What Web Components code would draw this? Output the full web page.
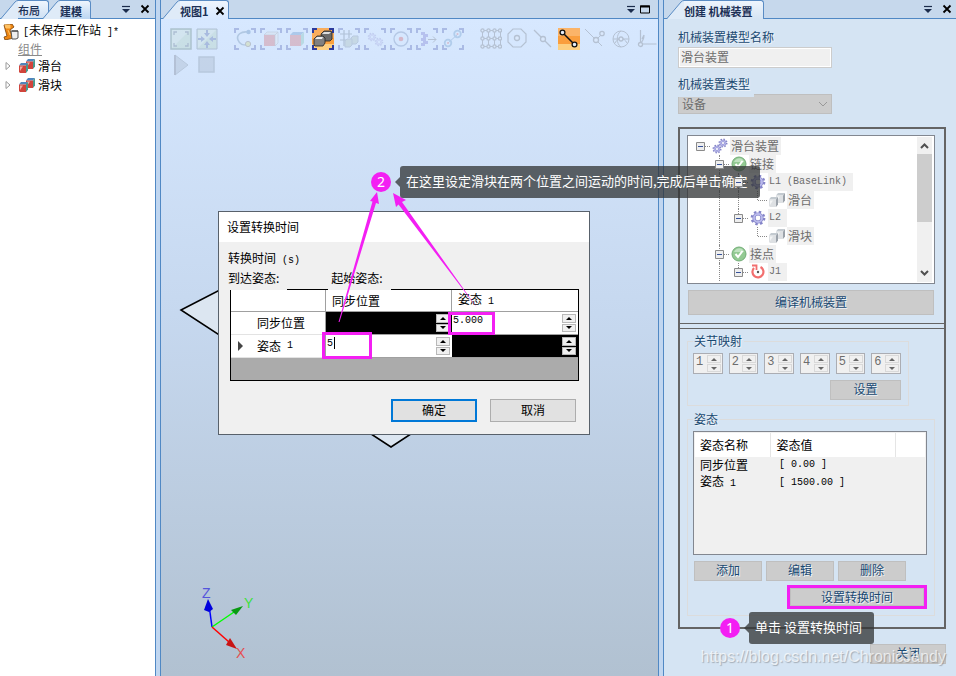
<!DOCTYPE html>
<html lang="zh-CN">
<head>
<meta charset="utf-8">
<title>创建 机械装置</title>
<style>
html, body { height: 100%; }
body {
  margin: 0; min-height: 676px; position: relative; overflow: hidden;
  font: 12px/16px "Noto Sans CJK SC", sans-serif; color: #000;
}
</style>
</head>
<body>
<station-app></station-app>
<script>
const MONO = '"Liberation Mono", "Noto Sans CJK SC", monospace';
const corners = '<path d="M1 5V1h4M17 1h4v4M21 17v4h-4M5 21H1v-4" fill="none" stroke="#2c3a9c" stroke-width="2"/>';
const gear = (cx, cy, r, w) => `<circle cx="${cx}" cy="${cy}" r="${r}" fill="none" stroke="#8484c8" stroke-width="${w}"/><circle cx="${cx}" cy="${cy}" r="${r + w * .7}" fill="none" stroke="#8484c8" stroke-width="${w * .7}" stroke-dasharray="${(r + w * .7) * .3927} ${(r + w * .7) * .3927}"/><circle cx="${cx}" cy="${cy}" r="${r}" fill="none" stroke="#b9b9ec" stroke-width="${w * .6}"/>`;
const oneCube = (x, y, f, hi, side, top) => `<g transform="translate(${x} ${y})"><path d="M0 2.500L2 0h7L7 2.500z" fill="${top}"/><path d="M0 2.500h7V10H1L0 9z" fill="${f}"/><path d="M1 3.500h3L1 8z" fill="${hi}"/><path d="M7 2.500L9 0v7.500L7 10z" fill="${side}"/></g>`;
const cubes = (f, hi, side, top) => oneCube(7, 1, f, hi, side, top) + oneCube(0, 5, f, hi, side, top);
const ring = (x, y, r = 2.5, c = '#555') => `<circle cx="${x}" cy="${y}" r="${r}" fill="#e6eef8" stroke="${c}" stroke-width="1.3"/>`;
const ICONS = {
  fit: [22, '<path d="M1 1h20v20H1z" fill="#a5c8a0" stroke="#355a46" stroke-width="1.500"/><path d="M2 2h18L2 20z" fill="#fff" opacity=".4"/><path d="M4 7V4h3M15 4h3v3M18 15v3h-3M7 18H4v-3" fill="none" stroke="#345" stroke-width="1.300"/>'],
  center: [22, '<path d="M1 1h20v20H1z" fill="#a5c8a0" stroke="#456"/><path d="M2 2h18L2 20z" fill="#fff" opacity=".4"/><path d="M11 9L8 5h2V2h2v3h2zM11 13l-3 4h2v3h2v-3h2zM9 11L5 8v2H2v2h3v2zM13 11l4-3v2h3v2h-3v2z" fill="#243a86"/>'],
  curve: [22, corners + '<path d="M14 4C7 3 2 7 4 12s5 5 9 5" fill="none" stroke="#456d92" stroke-width="1.600"/><circle cx="14.500" cy="4" r="2.200" fill="#2c65a0"/><circle cx="14" cy="16" r="2.600" fill="#d0d254" stroke="#654"/>'],
  surface: [22, corners + '<path d="M4 7l3-3h11l-3 3z" fill="#ddd" stroke="#777" stroke-width=".6"/><path d="M4 7h11v11H4z" fill="#d34343"/><path d="M15 7l3-3v11l-3 3z" fill="#e8e8e8" stroke="#777" stroke-width=".6"/>'],
  solid: [22, corners + '<path d="M4 7l3-3h11l-3 3z" fill="#3873b5"/><path d="M4 7h11v11H4z" fill="#d34343"/><path d="M15 7l3-3v11l-3 3z" fill="#63b49a"/>'],
  part: [22, '<path d="M0 0h22v22H0z" fill="#f9ad5c"/><path d="M0 10h22v6H0z" fill="#fba13f"/><path d="M0 16h22v6H0z" fill="#fcce80"/>' + corners + '<path d="M9 6l3-3h7l1 2v6l-2 2h-8z" fill="#6a6a6a" stroke="#222" stroke-width=".8"/><path d="M10 6l2-2h7l-2 2z" fill="#ddd"/><path d="M2 11l3-3h6l2 2v5l-2 3H3l-1-1z" fill="#808080" stroke="#222" stroke-width=".8"/><path d="M3 11l2-2h6l-1 2z" fill="#eee"/>'],
  mesh: [22, corners + '<path d="M6 2v16M11 2v8M2 6h12M2 12h7" stroke="#456" stroke-width="1.200"/><path d="M13 10l2-2h5v6l-2 2h-5z" fill="#9aaf9f" stroke="#678"/><path d="M7 13l2-2h5v6l-2 2H7z" fill="#9aaf9f" stroke="#678"/>'],
  mech: [22, corners + gear(8, 9, 2.2, 2) + gear(15, 14, 2.2, 2)],
  target: [22, corners + '<circle cx="11" cy="11" r="7" fill="none" stroke="#526d9d" stroke-width="1.300"/><circle cx="11" cy="11" r="2.300" fill="#d63030"/>'],
  frame: [22, corners + '<path d="M5 4h4v2h3v3h-2v4h2v3h-3v2H5v-3h2v-2H5v-3h2V7H5z" fill="#5854c0"/><path d="M12 11.500h8M17 8.500l3 3-3 3" fill="none" stroke="#555"/>'],
  path: [22, corners + '<path d="M6 15L16 6" stroke="#4874a8"/><circle cx="6" cy="15" r="3.300" fill="none" stroke="#4881b8" stroke-width="1.800"/><circle cx="15.500" cy="6" r="3.300" fill="none" stroke="#4881b8" stroke-width="1.800"/><circle cx="6" cy="15" r="1" fill="#d44"/><circle cx="15.500" cy="6" r="1" fill="#d44"/>'],
  snap: [22, '<path d="M2.500 2.500h18v16h-18zM8.500 2.500v16M14.500 2.500v16M2.500 10.500h18" fill="none" stroke="#555"/>' + [2.5, 8.5, 14.5, 20].map(x => [2.5, 10.5, 18.5].map(y => ring(x, y, 1.6)).join('')).join('')],
  octagon: [22, '<path d="M7 1h8l5 5v8l-5 5H7l-5-5V6z" fill="none" stroke="#555" stroke-width="1.200"/>' + ring(11, 10)],
  mid: [22, '<path d="M2 2l17 17" stroke="#555" stroke-width="1.200"/>' + ring(11, 11)],
  end: [22, '<path d="M0 0h22v22H0z" fill="#fbb469"/><path d="M0 8h22v8H0z" fill="#fa9e3d"/><path d="M0 16h22v6H0z" fill="#fdcf80"/><path d="M5 5l12 12" stroke="#111" stroke-width="1.500"/>' + ring(4.5, 4.5, 2.4, '#111') + ring(16.5, 16.5, 2.4, '#111')],
  edge: [22, '<path d="M1 1l17 17M12 12l6-6" stroke="#555"/>' + ring(12, 12) + ring(18, 5.5, 2.2)],
  gravity: [22, '<circle cx="11" cy="11" r="8" fill="none" stroke="#555"/><path d="M3 11h16M11 3c-5 3-5 13 0 16M5 15c3-6 9-6 12 0" fill="none" stroke="#555"/>' + ring(11, 11, 2)],
  origin: [22, '<path d="M4.500 2v14h16M4 16c3-3 4-6 4-9M8 7l-2 4" fill="none" stroke="#555" stroke-width="1.200"/>' + ring(4.5, 16.5, 2)],
  play: [22, '<path d="M5 1l13 10L5 21z" fill="#93a2b2" stroke="#667482"/><path d="M5 1v20" stroke="#556" stroke-width="2"/>'],
  stop: [22, '<path d="M3 3h15v15H3z" fill="#93a2b2" stroke="#667482" stroke-width="1.500"/>'],
  robot: [16, '<path d="M1 1l8-1 2 3-4 3 2 5h2v3l-9 2-1-3 3-1-2-7z" fill="#ee8713" stroke="#784007" stroke-width=".8"/><path d="M2 1h5v3H3zM5 6l2 5" fill="#ffc265" stroke="#ffc265"/><path d="M8 7h7v7l-2 1H9z" fill="#eee" stroke="#555"/><path d="M9 7h6" stroke="#333"/>'],
  block: [16, cubes('#d0453c', '#eeb0a4', '#4a9a8c', '#4f86bd')],
  ghost: [16, cubes('#dde0e3', '#f4f5f6', '#9ba2aa', '#c3cad0')],
  gears: [16, gear(5, 11, 2.2, 2.2) + gear(11, 5, 2.2, 2.2)],
  gear: [16, gear(8, 8, 4, 3.2)],
  check: [16, '<circle cx="8" cy="8" r="7" fill="#93ca93" stroke="#72ad77"/><path d="M3 6c2-5 9-5 10 0" fill="#bfe2bf"/><path d="M4.500 8l2.500 3 4.500-6" fill="none" stroke="#fff" stroke-width="2"/>'],
  rotate: [16, '<path d="M10.500 3A5.500 5.500 0 1 1 4 4" fill="none" stroke="#f26f6f" stroke-width="2.200"/><path d="M2 1.500h4.500V6" fill="none" stroke="#f26f6f" stroke-width="1.800"/><circle cx="8" cy="8" r="1.200" fill="#555"/>'],
  drop: [10, '<path d="M1 2.500h8" stroke="#1b2c4c" stroke-width="1.200"/><path d="M1 5h8L5 9z" fill="#1b2c4c"/>'],
  close: [10, '<path d="M1.500 1.500l7 7M8.500 1.500l-7 7" stroke="#000" stroke-width="1.800"/>'],
  max: [10, '<path d="M.5 2h9v7h-9z" fill="none" stroke="#000"/><path d="M0 2.500h10" stroke="#000" stroke-width="2"/>'],
  tri: [10, '<path d="M3 1.500L7 5 3 8.500z" fill="none" stroke="#999"/>']
};

function define(name, markup, setup) {
  const t = document.createElement('template');
  customElements.define(name, class extends HTMLElement {
    constructor() {
      super();
      t.innerHTML ||= markup;
      this.attachShadow({ mode: 'open' }).append(t.content.cloneNode(true));
    }
    connectedCallback() { if (setup) setup(this, this.shadowRoot); }
  });
}

define('ui-icon', `<style>:host{display:block;flex:none;line-height:0} svg{display:block}</style><svg aria-hidden="true"></svg>`, (el, root) => {
  const [size, body] = ICONS[el.getAttribute('name')];
  const s = root.querySelector('svg');
  s.setAttribute('viewBox', `0 0 ${size} ${size}`);
  s.setAttribute('width', size); s.setAttribute('height', size);
  s.innerHTML = body;
});

define('icon-button', `<style>
  :host{display:block;flex:none}
  :host([faded]) button{opacity:.25}
  button{display:block;border:0;padding:0;margin:0;background:none}
</style><button type="button"></button>`, (el, root) => {
  const b = root.querySelector('button');
  b.setAttribute('aria-label', el.getAttribute('icon'));
  b.innerHTML = `<ui-icon name="${el.getAttribute('icon')}"></ui-icon>`;
});

define('dock-tab', `<style>
  :host{display:flex;height:18px;flex:none;margin-right:-1px}
  :host([active]){height:19px;position:relative}
  svg{flex:none;display:block}
  .b{display:flex;align-items:center;gap:6px;box-sizing:border-box;border-top:1px solid #5a8cc4;border-right:1px solid #5a8cc4;border-radius:0 3px 0 0;
     background:linear-gradient(#eef5fd,var(--end,#cfe0f3));padding:1px var(--tab-pad,8px) 0 0;font-size:11px;color:#1b2f55;white-space:nowrap}
  button{all:unset;font-weight:500}
  :host([active]) button{font-weight:700}
</style><svg width="17" height="19" viewBox="0 0 17 19"><path d="M0 19L14 2q1.500-1.500 3-1.500V19z" fill="#dfebf8"/><path d="M0 18.500L14 2q1.500-1.500 3-1.500" fill="none" stroke="#5a8cc4"/></svg><div class="b"><button type="button"><slot></slot></button><slot name="end"></slot></div>`);

define('dock-panel', `<style>
  :host{display:flex;flex-direction:column;min-width:0;box-sizing:border-box}
  header{display:flex;flex:none;height:18px;background:#c6d8ec;border-bottom:1px solid #5088c4}
  .tabs{display:flex;flex:1;padding-left:var(--tab-start,0)}
  .tools{display:flex;align-items:center;gap:var(--tool-gap,9px);padding-right:var(--tool-end,5px)}
  .content{flex:1;display:flex;flex-direction:column;min-height:0;position:relative}
</style><header><div class="tabs"><slot name="tab"></slot></div><div class="tools"><slot name="tool"></slot></div></header><div class="content"><slot></slot></div>`);

define('push-button', `<style>
  :host{display:block;flex:none}
  button{display:block;width:100%;height:var(--h,20px);box-sizing:border-box;margin:0;padding:0 0 2px;border:1px solid #bfbfbf;background:#ccc;
    font:12px/16px "Noto Sans CJK SC",sans-serif;color:#1b4a72;text-shadow:1px 1px #eef3f8}
  :host([kind="dialog"]) button{background:#e1e1e1;border-color:#adadad;color:#000;text-shadow:none}
  :host([primary]) button{border:2px solid #0078d7!important}
</style><button type="button"><slot></slot></button>`);

define('spin-arrows', `<style>
  :host{display:grid;grid-template-rows:1fr 1fr;width:14px;gap:1px;flex:none;box-sizing:border-box}
  button{display:grid;place-items:center;border:1px solid #b8b8b8;background:#f0f0f0;padding:0;margin:0;min-height:0}
  :host([dim]) button{border-color:#d9d9d9}
  :host([dim]) path{fill:#666}
  svg{display:block}
</style><button type="button" aria-label="增加"><svg width="6" height="3"><path d="M3 0l3 3H0z"/></svg></button><button type="button" aria-label="减少"><svg width="6" height="3"><path d="M0 0h6L3 3z"/></svg></button>`);

define('joint-spin', `<style>
  :host{display:flex;width:30px;height:21px;box-sizing:border-box;border:1px solid #abadb3;background:#f0f0f0;padding:1px}
  input{flex:1;min-width:0;width:0;border:0;padding:0 0 4px 1px;margin:0;background:none;color:#6d6d6d;font:12px/12px ${MONO}}
</style><input type="text"><spin-arrows dim></spin-arrows>`, (el, root) => {
  const i = root.querySelector('input');
  i.value = el.getAttribute('value'); i.setAttribute('aria-label', '关节 ' + i.value);
});

define('time-cell', `<style>
  :host{display:flex;height:22px;box-sizing:border-box;padding:2px 2px 2px 0;position:relative}
  :host([dark]){background:#000}
  :host([editing])::before{content:"";position:absolute;left:8px;top:2px;height:12px;border-left:1px solid #000}
  input{flex:1;min-width:0;width:0;height:14px;border:0;padding:0 0 0 1px;margin:0;background:none;color:#000;font:10px/14px ${MONO}}
</style><input type="text"><spin-arrows></spin-arrows>`, (el, root) => {
  const i = root.querySelector('input');
  i.value = el.getAttribute('value') || ''; i.setAttribute('aria-label', el.getAttribute('label'));
});

define('group-box', `<style>
  :host{display:block}
  fieldset{margin:0;min-width:0;border:1px solid #dcdcdc;padding:4px 7px var(--bottom,5px) 5px;display:block}
  legend{padding:0 2px 0 1px;line-height:16px;color:#1b4a72;text-shadow:1px 1px #eef3f8}
</style><fieldset><legend></legend><slot></slot></fieldset>`, (el, root) => { root.querySelector('legend').textContent = el.getAttribute('label'); });

define('tree-node', `<style>
  :host{display:flex;height:18px;align-items:center;color:#6d6d6d}
  .g{width:19px;height:18px;flex:none;position:relative}
  .g i{position:absolute;left:9px;width:0;border-left:1px dotted #888;top:0;bottom:0}
  .g.u i,.g.L i{bottom:9px}
  .g.B i{display:none}
  .g.b::after,.g.u::after,.g.B::after,.g.L::after{content:"";position:absolute;left:10px;right:0;top:9px;border-top:1px dotted #888}
  .g svg{position:absolute;left:5px;top:5px;z-index:1}
  .ic{width:19px;flex:none;display:grid;place-items:center}
  .t{background:#f0f0f0;margin-left:1px;padding:0 2px 0 1px;height:18px;line-height:18px;white-space:nowrap}
  :host([mono]) .t{font:10px/18px ${MONO};padding-right:6px}
</style>`, (el, root) => {
  const box = '<svg width="9" height="9"><path d="M.5.5h8v8h-8z" fill="#eee" stroke="#8a8a8a"/><path d="M2 4.500h5" stroke="#36529a"/></svg>';
  const w = document.createElement('template');
  w.innerHTML = [...el.getAttribute('guides')].map(c => `<span class="g ${c === '_' ? '' : c}">${c === '_' ? '' : '<i></i>'}${'bBu'.includes(c) ? box : ''}</span>`).join('')
    + `<span class="ic"><ui-icon name="${el.getAttribute('icon')}"></ui-icon></span><span class="t"><slot></slot></span>`;
  root.append(w.content);
});

define('tree-view', `<style>
  :host{display:flex;height:149px;box-sizing:border-box;border:1px solid #828790;background:#fff;padding:1px 2px 1px 3px;overflow:hidden}
  .n{flex:1;min-width:0;overflow:hidden}
  .s{width:15px;background:#f0f0f0;display:flex;flex-direction:column;flex:none}
  .s svg{display:block;flex:none}
  .th{height:68px;background:#cdcdcd}
  .sp{flex:1}
</style><div class="n"><slot></slot></div><div class="s"><svg width="15" height="17"><path d="M4 11l3.500-3.500L11 11" fill="none" stroke="#505050" stroke-width="2"/></svg><div class="th"></div><div class="sp"></div><svg width="15" height="17"><path d="M4 6l3.500 3.500L11 6" fill="none" stroke="#505050" stroke-width="2"/></svg></div>`);

define('pose-list', `<style>
  :host{display:block;height:124px;box-sizing:border-box;border:1px solid #828790;background:#f0f0f0;padding:1px}
  table{width:100%;border-collapse:collapse;table-layout:fixed;color:#000}
  th{font-weight:400;text-align:left;background:#fff;height:24px;padding:0 5px;line-height:16px}
  th+th{border-left:1px solid #e5e5e5}
  td{padding:0 5px;height:16px;line-height:16px;white-space:nowrap}
  td+td,.n{font:10px/16px ${MONO};white-space:pre}
  td+td{padding-left:8px}
</style><table><colgroup><col style="width:33%"><col style="width:54%"><col></colgroup>
<thead><tr><th>姿态名称</th><th>姿态值</th><th></th></tr></thead>
<tbody><tr><td>同步位置</td><td>[ 0.00 ]</td><td></td></tr><tr><td>姿态<span class="n"> 1</span></td><td>[ 1500.00 ]</td><td></td></tr></tbody></table>`);

define('mark-frame', `<style>:host{display:block;box-sizing:border-box;border:3px solid #f31ff3}</style><slot></slot>`);

define('station-tree', `<style>
  :host{display:block;flex:1;background:#fff;padding:3px 3px 0}
  .r{display:flex;align-items:center;height:19px;white-space:nowrap}
  .r.root{gap:4px}
  .m{font:10px/16px ${MONO};white-space:pre}
  a{display:block;color:#8a8a8a;margin-left:15px;line-height:15px;width:max-content}
  .r span{margin-left:3px}
  .r.root span{margin:0}
  .k{margin-left:6px}
</style><div class="r root"><ui-icon name="robot"></ui-icon><div><span class="m">[</span>未保存工作站<span class="m"> ]*</span></div></div>
<a href="#">组件</a>
<div class="r"><ui-icon name="tri"></ui-icon><ui-icon class="k" name="block"></ui-icon><span>滑台</span></div>
<div class="r"><ui-icon name="tri"></ui-icon><ui-icon class="k" name="block"></ui-icon><span>滑块</span></div>`);

define('tool-strip', `<style>
  :host{display:flex;flex-direction:column;gap:4px;padding:9px 0 0 9px}
  div{display:flex;gap:4px}
  .g1{margin-left:12px}
</style><div>${['fit', 'center', 'curve', 'surface', 'solid', 'part', 'mesh', 'mech', 'target', 'frame', 'path', 'snap', 'octagon', 'mid', 'end', 'edge', 'gravity', 'origin'].map(n =>
  `<icon-button icon="${n}"${n === 'part' || n === 'end' ? '' : ' faded'}${n === 'curve' || n === 'snap' ? ' class="g1"' : ''}></icon-button>`).join('')}</div>
<div><icon-button icon="play" faded></icon-button><icon-button icon="stop" faded></icon-button></div>`);

define('scene-view', `<style>
  :host{display:block;flex:1;position:relative;overflow:hidden;background:linear-gradient(#d7e8ff,#c6d8ef 45%,#b1c1d1)}
  .part{position:absolute;left:0;top:0}
  .axes{position:absolute;left:34px;bottom:8px}
  .axes text{font:14px "Liberation Sans",sans-serif}
  tool-strip{position:relative}
</style>
<svg class="part" width="450" height="440" aria-hidden="true"><path d="M20 291L199 199 409 311 230 428z" fill="#dce6f1" stroke="#000" stroke-width="1.500"/></svg>
<tool-strip></tool-strip>
<svg class="axes" width="66" height="90" viewBox="0 0 66 90"><g stroke-width="1.500"><path d="M17 49L14 27" stroke="#00f"/><path d="M17 49l22-15" stroke="#0f0"/><path d="M17 49l17 15" stroke="#f00"/></g><path d="M13 21l5 10-4 3-5-2z" fill="#00d"/><path d="M48 28l-7 9-5-5z" fill="#089a12"/><path d="M42 71l-11-4 4-7z" fill="#c81414"/><text x="7" y="20" fill="#5454dc">Z</text><text x="49" y="30" fill="#3de03d">Y</text><text x="41" y="80" fill="#e45050">X</text></svg>
<time-dialog></time-dialog>`);

define('time-dialog', `<style>
  :host{display:block;position:absolute;left:57px;top:192px;width:372px;box-sizing:border-box;border:1px solid #58616b;background:#f0f0f0}
  h1{margin:0;font-size:12px;font-weight:400;background:#fff;line-height:30px;padding-left:8px}
  .b{padding:8px 10px 12px 11px}
  p{margin:0 0 1px -2px;line-height:16px}
  .m{font:10px/16px ${MONO};white-space:pre}
  .cap{display:flex;height:20px;line-height:20px;margin-left:-2px}
  .cap i{border-bottom:1px solid #000;flex:1}
  .cap i:first-of-type{flex:none;width:41px;margin-right:3px}
  .cap span{padding-right:8px;line-height:16px}
  .grid{border:1px solid #000;border-top:0;background:#ababab;padding-bottom:22px}
  table{width:100%;border-collapse:separate;border-spacing:0;table-layout:fixed;background:#fff}
  th{font-weight:400;text-align:left;padding:0 0 0 6px;border-right:1px solid #a0a0a0;height:22px;line-height:16px;border-bottom:1px solid #a0a0a0;box-sizing:border-box}
  thead th:last-child{border-right:0}
  tbody th{padding:0;height:23px;border-bottom-color:#e3e3e3}
  td{padding:0;border-bottom:1px solid #a0a0a0}
  .rh{display:flex;align-items:center;padding-left:7px}
  .rh svg{width:19px;height:10px;flex:none}
  .act{display:flex;justify-content:flex-end;gap:13px;margin-top:18px;padding-right:3px}
  push-button{width:86px;--h:23px}
</style><h1>设置转换时间</h1><div class="b"><p>转换时间<span class="m"> (s)</span></p>
<div class="cap"><span>到达姿态:</span><i></i><span>起始姿态:</span><i></i></div>
<div class="grid"><table><colgroup><col style="width:95px"><col style="width:126px"><col></colgroup>
<thead><tr><th></th><th>同步位置</th><th>姿态<span class="m"> 1</span></th></tr></thead>
<tbody><tr><th><div class="rh"><svg></svg>同步位置</div></th><td><time-cell dark label="同步位置到同步位置"></time-cell></td><td><time-cell value="5.000" label="姿态 1 到同步位置"></time-cell></td></tr>
<tr><th><div class="rh"><svg viewBox="0 0 19 10"><path d="M0 0l5 5-5 5z" fill="#444"/></svg>姿态<span class="m"> 1</span></div></th><td><time-cell editing value="5" label="同步位置到姿态 1"></time-cell></td><td><time-cell dark label="姿态 1 到姿态 1"></time-cell></td></tr></tbody></table></div>
<div class="act"><push-button kind="dialog" primary>确定</push-button><push-button kind="dialog">取消</push-button></div></div>`);

define('mechanism-form', `<style>
  :host{display:flex;flex-direction:column;flex:1;background:#d5e4f3;padding:8px 10px 0 14px}
  label{color:#1b4a72;text-shadow:1px 1px #eef3f8;line-height:20px;display:block}
  label.two{margin-top:6px;margin-bottom:-3px;height:23px;width:76px;background:#d5e4f3;position:relative;z-index:1}
  input,select{box-sizing:border-box;width:154px;margin:0;font:12px/16px "Noto Sans CJK SC",sans-serif;color:#6d6d6d;border-radius:0}
  input{height:21px;border:1px solid #ccc;background:#f0f0f0;box-shadow:inset 0 0 0 1px #fff;padding:0 2px 2px}
  .sel{width:154px;position:relative;display:block}
  select{appearance:none;display:block;height:20px;border:1px solid #bfbfbf;background:#ccc;padding:0 3px;opacity:1}
  .sel svg{position:absolute;right:4px;top:7px}
  .box{border:2px solid #646464;margin-top:13px;display:flex;flex-direction:column}
  .a{padding:6px 9px 8px 7px;display:flex;flex-direction:column;gap:6px}
  .a push-button{--h:25px;margin:0 1px}
  .line{height:4px;border:1px solid #646464;border-width:1px 0}
  .c{padding:4px 9px 11px 7px}
  .joints{width:222px}
  .row{display:flex;gap:6px}
  .set{width:71px;margin:6px 0 0 auto}
  group-box+group-box{margin-top:5px;--bottom:6px}
  .three{display:flex;gap:4px;margin:6px 0 4px 1px}
  .three push-button{width:68px}
  mark-frame{width:140px;margin-left:auto}
  mark-frame push-button{--h:18px}
  .end{width:76px;margin:15px 0 0 auto}
</style><label for="name">机械装置模型名称</label><input id="name" type="text" value="滑台装置">
<label class="two" for="kind">机械装置类型</label><div class="sel"><select id="kind"><option>设备</option></select><svg width="10" height="7"><path d="M1 1l4 4 4-4" fill="none" stroke="#999"/></svg></div>
<div class="box"><div class="a"><tree-view>
<tree-node guides="B" icon="gears">滑台装置</tree-node>
<tree-node guides="_b" icon="check">链接</tree-node>
<tree-node guides="_vb" icon="gear" mono>L1 (BaseLink)</tree-node>
<tree-node guides="_vvL" icon="ghost">滑台</tree-node>
<tree-node guides="_vu" icon="gear" mono>L2</tree-node>
<tree-node guides="_v_L" icon="ghost">滑块</tree-node>
<tree-node guides="_b" icon="check">接点</tree-node>
<tree-node guides="_vu" icon="rotate" mono>J1</tree-node>
</tree-view><push-button>编译机械装置</push-button></div>
<div class="line"></div>
<div class="c"><group-box class="joints" label="关节映射"><div class="row">${[1, 2, 3, 4, 5, 6].map(n => `<joint-spin value="${n}"></joint-spin>`).join('')}</div><push-button class="set">设置</push-button></group-box>
<group-box label="姿态"><pose-list></pose-list><div class="three"><push-button>添加</push-button><push-button>编辑</push-button><push-button>删除</push-button></div><mark-frame><push-button>设置转换时间</push-button></mark-frame></group-box></div></div>
<push-button class="end">关闭</push-button>`);

define('step-note', `<style>
  :host{display:flex;align-items:center;position:absolute;width:max-content;color:#fff}
  b{width:20px;height:20px;border-radius:50%;background:#f31ff3;font:14px/20px "Noto Sans",sans-serif;text-align:center}
  i{border:5px solid transparent;border-right-color:rgba(50,52,54,.76);border-left:0;margin-left:4px}
  span{background:rgba(50,52,54,.76);border-radius:3px;padding:0 12px 2px 6px;font-size:13px;line-height:30px;white-space:nowrap}
</style><b></b><i></i><span><slot></slot></span>`, (el, root) => { root.querySelector('b').textContent = el.getAttribute('step'); });

define('station-app', `<style>
  :host{display:grid;grid-template-columns:156px minmax(0,1fr) 293px;gap:0 4px;min-height:100vh;background:#c0d6f0;position:relative}
  dock-panel{border:0 solid #5088c4}
  .l{border-right-width:1px;--tab-start:1px}
  .v{border-width:0 1px;--tab-start:2px;--tool-gap:4px;--tool-end:8px;--tab-pad:3px}
  .r{border-left-width:1px;--tab-start:3px;--tab-pad:10px;--tool-end:4px}
  .l dock-tab+dock-tab{margin-left:-5px}
  .arrows{position:absolute;left:0;top:0;pointer-events:none}
  .s2{left:371px;top:166px}
  .s1{left:720px;top:612px}
  .f{position:absolute}
  .f1{left:448px;top:312px;width:47px;height:23px}
  .f2{left:322px;top:332px;width:50px;height:27px}
  .wm{position:absolute;right:10px;bottom:8px;font:16px/22px "Liberation Sans",sans-serif;color:rgba(255,255,255,.7);text-shadow:1px 1px 1px rgba(90,90,90,.4)}
</style>
<dock-panel class="l"><dock-tab slot="tab">布局</dock-tab><dock-tab slot="tab" active style="--end:#bcd6f2">建模</dock-tab><icon-button slot="tool" icon="drop"></icon-button><icon-button slot="tool" icon="close"></icon-button><station-tree></station-tree></dock-panel>
<dock-panel class="v"><dock-tab slot="tab" active style="--end:#d7e8ff">视图1<ui-icon slot="end" name="close"></ui-icon></dock-tab><icon-button slot="tool" icon="drop"></icon-button><icon-button slot="tool" icon="max"></icon-button><scene-view></scene-view></dock-panel>
<dock-panel class="r"><dock-tab slot="tab" active style="--end:#d5e4f3">创建 机械装置</dock-tab><icon-button slot="tool" icon="drop"></icon-button><icon-button slot="tool" icon="close"></icon-button><mechanism-form></mechanism-form></dock-panel>
<mark-frame class="f f1"></mark-frame><mark-frame class="f f2"></mark-frame>
<svg class="arrows" width="600" height="360" aria-hidden="true"><g fill="#f31ff3"><path d="M338.500 322L372.500 201.500 370 201 377 192 379 204 376 203 339.500 322z"/><path d="M477.500 308.500L398.500 204.500 396 207 393 193 406 200 402 202z"/></g></svg>
<step-note class="s2" step="2">在这里设定滑块在两个位置之间运动的时间,完成后单击确定</step-note>
<step-note class="s1" step="1">单击 设置转换时间</step-note>
<div class="wm">https://blog.csdn.net/ChronicJandy</div>`);
</script>
</body>
</html>
